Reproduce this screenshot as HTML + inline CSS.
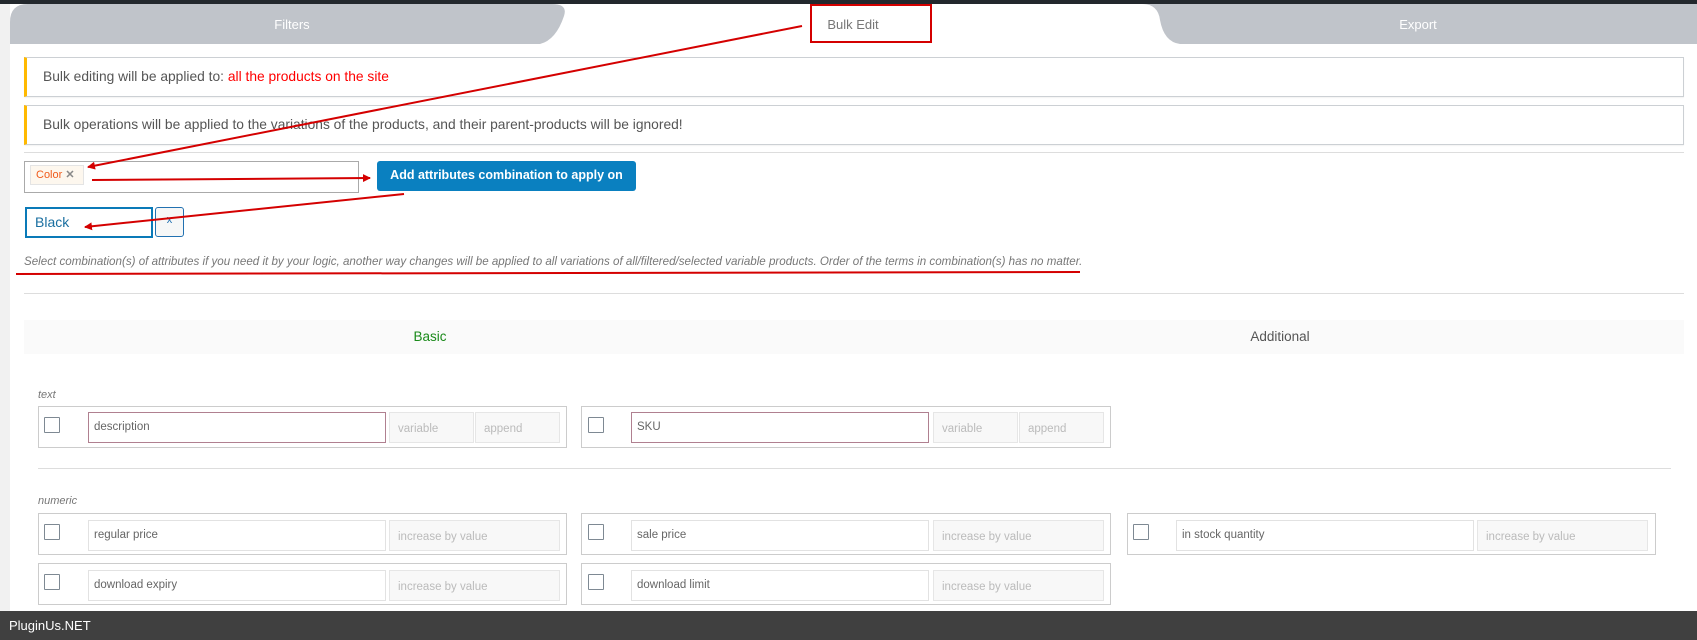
<!DOCTYPE html>
<html><head><meta charset="utf-8"><style>
*{box-sizing:border-box;margin:0;padding:0}
body{width:1697px;height:640px;overflow:hidden;background:#fff;font-family:"Liberation Sans",sans-serif;position:relative;color:#555}
.a{position:absolute}
.notice{position:absolute;left:24px;width:1660px;border:1px solid #ccd0d4;border-left:3px solid #ffb900;font-size:13.8px;padding-left:16px;color:#555;box-shadow:0 1px 1px rgba(0,0,0,.05)}
.box{position:absolute;border:1px solid #ccc;background:#fff}
.cb{position:absolute;width:16px;height:16px;border:1px solid #7e8993;background:#fff;border-radius:1px}
.inp{position:absolute;border:1px solid #e2e2e2;background:#fff;font-size:11.5px;color:#666;padding:8px 5px;height:31px}
.ro{position:absolute;border:1px solid #e6e6e6;background:#f8f8f8;font-size:11.5px;color:#bbb;padding:10px 8px;height:31px}
.red{border-color:#b08090}
.lbl{position:absolute;font-style:italic;font-size:11px;color:#777}
</style></head><body>
<div class="a" style="left:0;top:0;width:1697px;height:4px;background:#23282d"></div>
<div class="a" style="left:0;top:4px;width:10px;height:607px;background:#f1f1f1"></div>
<svg class="a" style="left:0;top:0" width="1697" height="50">
<path d="M10 44 L10 22 Q10 4 28 4 L552 4 Q568 4 564 16 Q556 40 540 44 Z" fill="#c0c4ca"/>
<path d="M1142 4 Q1158 4 1160 20 Q1164 42 1180 44 L1697 44 L1697 4 Z" fill="#c0c4ca"/>
<text x="292" y="29" fill="#fff" font-size="13" text-anchor="middle" font-family="Liberation Sans">Filters</text>
<text x="1418" y="29" fill="#fff" font-size="13" text-anchor="middle" font-family="Liberation Sans">Export</text>
<text x="853" y="29" fill="#777" font-size="13" text-anchor="middle" font-family="Liberation Sans">Bulk Edit</text>
<rect x="811" y="5" width="120" height="37" fill="none" stroke="#d40000" stroke-width="2"/>
</svg>
<div class="notice" style="top:57px;height:40px;line-height:38px">Bulk editing will be applied to: <span style="color:#f00">all the products on the site</span></div>
<div class="notice" style="top:105px;height:40px;line-height:38px">Bulk operations will be applied to the variations of the products, and their parent-products will be ignored!</div>
<div class="a" style="left:24px;top:152px;width:1660px;height:1px;background:#ddd"></div>
<div class="a" style="left:24px;top:161px;width:335px;height:32px;border:1px solid #aaa;background:#fff"></div>
<div class="a" style="left:30px;top:165px;width:54px;height:20px;background:#fdf7ee;border:1px solid #e4e4e4;font-size:11px;color:#f05a1a;line-height:18px;padding-left:5px">Color <b style="color:#888">✕</b></div>
<div class="a" style="left:377px;top:161px;width:259px;height:30px;background:#0a80c0;border-radius:3px;color:#fff;font-size:12.5px;font-weight:bold;text-align:center;line-height:28px">Add attributes combination to apply on</div>
<div class="a" style="left:25px;top:207px;width:128px;height:31px;border:2px solid #0a7ab8;color:#1a6fa0;font-size:14px;line-height:27px;padding-left:8px">Black</div>
<div class="a" style="left:155px;top:207px;width:29px;height:30px;border:1px solid #2271b1;border-radius:3px;background:#f6f7f7;color:#2271b1;font-size:11px;text-align:center;line-height:24px">x</div>
<div class="lbl" style="left:24px;top:255px;font-size:11.6px;color:#777;white-space:nowrap">Select combination(s) of attributes if you need it by your logic, another way changes will be applied to all variations of all/filtered/selected variable products. Order of the terms in combination(s) has no matter.</div>
<div class="a" style="left:24px;top:293px;width:1660px;height:1px;background:#ddd"></div>
<div class="a" style="left:24px;top:320px;width:1660px;height:34px;background:#fafafa"></div>
<div class="a" style="left:380px;top:329px;width:100px;text-align:center;color:#1a8a1a;font-size:13.5px">Basic</div>
<div class="a" style="left:1220px;top:329px;width:120px;text-align:center;color:#555;font-size:13.5px">Additional</div>
<div class="lbl" style="left:38px;top:389px">text</div>
<div class="box" style="left:38px;top:406px;width:529px;height:42px"></div>
<div class="cb" style="left:44px;top:417px"></div>
<div class="inp red" style="left:88px;top:412px;width:298px">description</div>
<div class="ro" style="left:389px;top:412px;width:85px">variable</div>
<div class="ro" style="left:475px;top:412px;width:85px">append</div>
<div class="box" style="left:581px;top:406px;width:530px;height:42px"></div>
<div class="cb" style="left:588px;top:417px"></div>
<div class="inp red" style="left:631px;top:412px;width:298px">SKU</div>
<div class="ro" style="left:933px;top:412px;width:85px">variable</div>
<div class="ro" style="left:1019px;top:412px;width:85px">append</div>
<div class="a" style="left:38px;top:468px;width:1633px;height:1px;background:#ddd"></div>
<div class="lbl" style="left:38px;top:495px">numeric</div>
<div class="box" style="left:38px;top:513px;width:529px;height:42px"></div>
<div class="cb" style="left:44px;top:524px"></div>
<div class="inp" style="left:88px;top:520px;width:298px">regular price</div>
<div class="ro" style="left:389px;top:520px;width:171px">increase by value</div>
<div class="box" style="left:581px;top:513px;width:530px;height:42px"></div>
<div class="cb" style="left:588px;top:524px"></div>
<div class="inp" style="left:631px;top:520px;width:298px">sale price</div>
<div class="ro" style="left:933px;top:520px;width:171px">increase by value</div>
<div class="box" style="left:1127px;top:513px;width:529px;height:42px"></div>
<div class="cb" style="left:1133px;top:524px"></div>
<div class="inp" style="left:1176px;top:520px;width:298px">in stock quantity</div>
<div class="ro" style="left:1477px;top:520px;width:171px">increase by value</div>
<div class="box" style="left:38px;top:563px;width:529px;height:42px"></div>
<div class="cb" style="left:44px;top:574px"></div>
<div class="inp" style="left:88px;top:570px;width:298px">download expiry</div>
<div class="ro" style="left:389px;top:570px;width:171px">increase by value</div>
<div class="box" style="left:581px;top:563px;width:530px;height:42px"></div>
<div class="cb" style="left:588px;top:574px"></div>
<div class="inp" style="left:631px;top:570px;width:298px">download limit</div>
<div class="ro" style="left:933px;top:570px;width:171px">increase by value</div>
<div class="a" style="left:0;top:611px;width:1697px;height:29px;background:#404040;color:#fff;font-size:13px;line-height:29px;padding-left:9px">PluginUs.NET</div>
<svg class="a" style="left:0;top:0" width="1697" height="640">
<defs><marker id="m" markerWidth="8" markerHeight="8" refX="7" refY="4" orient="auto" markerUnits="userSpaceOnUse" viewBox="0 0 8 8"><path d="M0 0 L8 4 L0 8 Z" fill="#d40000"/></marker></defs>
<g stroke="#d40000" stroke-width="2" fill="none">
<line x1="802" y1="26" x2="88" y2="167" marker-end="url(#m)"/>
<line x1="92" y1="180" x2="370" y2="178" marker-end="url(#m)"/>
<line x1="404" y1="194" x2="85" y2="227" marker-end="url(#m)"/>
<line x1="16" y1="274" x2="1080" y2="272"/>
</g></svg>
</body></html>
